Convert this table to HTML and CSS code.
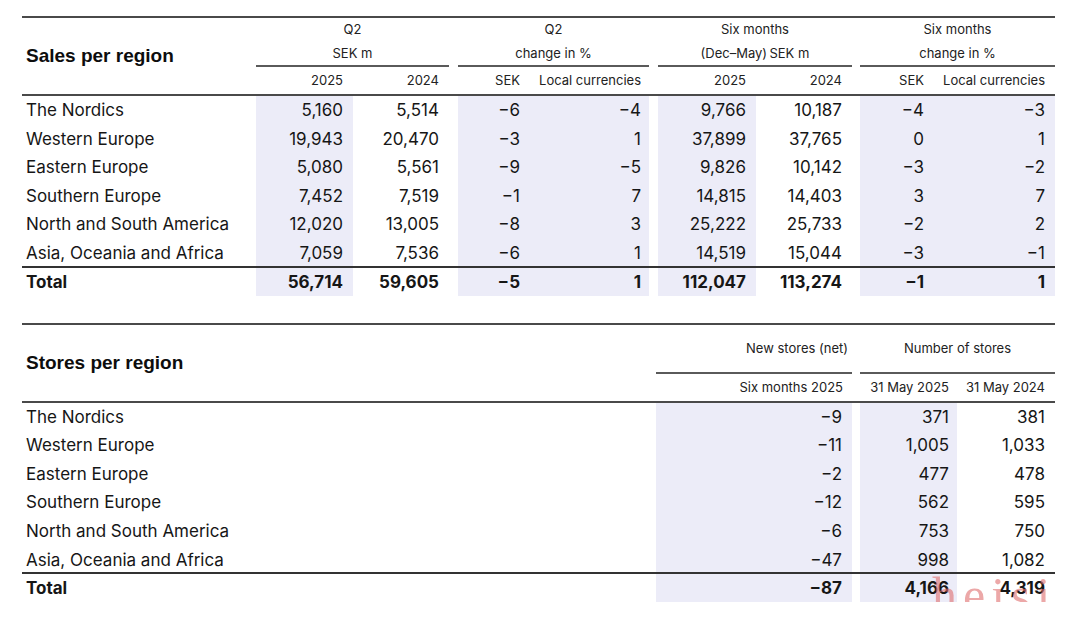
FILE: index.html
```html
<!DOCTYPE html>
<html lang="en">
<head>
<meta charset="utf-8">
<title>Sales and stores per region</title>
<link rel="stylesheet" href="styles.css">
</head>
<body>
<section class="tbl sales">
  <div class="thead">
    <div class="title">Sales per region</div>
    <div class="grp c2">Q2<br>SEK m</div>
    <div class="grp c5">Q2<br>change in %</div>
    <div class="grp c8">Six months<br>(Dec–May)&thinsp;SEK m</div>
    <div class="grp c11">Six months<br>change in %</div>
    <div class="sub c2">2025</div><div class="sub">2024</div><div class="sub"></div>
    <div class="sub">SEK</div><div class="sub lc">Local currencies</div><div class="sub"></div>
    <div class="sub">2025</div><div class="sub">2024</div><div class="sub"></div>
    <div class="sub">SEK</div><div class="sub">Local currencies</div>
  </div>
  <div class="tbody">
    <div class="lab">The Nordics</div><div class="sh">5,160</div><div>5,514</div><div></div><div class="sh">−6</div><div class="sh lc">−4</div><div></div><div class="sh">9,766</div><div>10,187</div><div></div><div class="sh">−4</div><div class="sh">−3</div>
    <div class="lab">Western Europe</div><div class="sh">19,943</div><div>20,470</div><div></div><div class="sh">−3</div><div class="sh lc">1</div><div></div><div class="sh">37,899</div><div>37,765</div><div></div><div class="sh">0</div><div class="sh">1</div>
    <div class="lab">Eastern Europe</div><div class="sh">5,080</div><div>5,561</div><div></div><div class="sh">−9</div><div class="sh lc">−5</div><div></div><div class="sh">9,826</div><div>10,142</div><div></div><div class="sh">−3</div><div class="sh">−2</div>
    <div class="lab">Southern Europe</div><div class="sh">7,452</div><div>7,519</div><div></div><div class="sh">−1</div><div class="sh lc">7</div><div></div><div class="sh">14,815</div><div>14,403</div><div></div><div class="sh">3</div><div class="sh">7</div>
    <div class="lab">North and South America</div><div class="sh">12,020</div><div>13,005</div><div></div><div class="sh">−8</div><div class="sh lc">3</div><div></div><div class="sh">25,222</div><div>25,733</div><div></div><div class="sh">−2</div><div class="sh">2</div>
    <div class="lab">Asia, Oceania and Africa</div><div class="sh">7,059</div><div>7,536</div><div></div><div class="sh">−6</div><div class="sh lc">1</div><div></div><div class="sh">14,519</div><div>15,044</div><div></div><div class="sh">−3</div><div class="sh">−1</div>
  </div>
  <div class="tfoot">
    <div class="lab">Total</div><div class="sh">56,714</div><div>59,605</div><div></div><div class="sh">−5</div><div class="sh lc">1</div><div></div><div class="sh">112,047</div><div>113,274</div><div></div><div class="sh">−1</div><div class="sh">1</div>
  </div>
</section>

<section class="tbl stores">
  <div class="thead">
    <div class="title">Stores per region</div>
    <div class="grp n2 right">New stores (net)</div>
    <div class="grp c4">Number of stores</div>
    <div class="sub n2">Six months 2025</div><div class="sub"></div>
    <div class="sub nar">31 May 2025</div><div class="sub">31 May 2024</div>
  </div>
  <div class="tbody">
    <div class="lab">The Nordics</div><div class="sh">−9</div><div></div><div class="sh nar">371</div><div>381</div>
    <div class="lab">Western Europe</div><div class="sh">−11</div><div></div><div class="sh nar">1,005</div><div>1,033</div>
    <div class="lab">Eastern Europe</div><div class="sh">−2</div><div></div><div class="sh nar">477</div><div>478</div>
    <div class="lab">Southern Europe</div><div class="sh">−12</div><div></div><div class="sh nar">562</div><div>595</div>
    <div class="lab">North and South America</div><div class="sh">−6</div><div></div><div class="sh nar">753</div><div>750</div>
    <div class="lab">Asia, Oceania and Africa</div><div class="sh">−47</div><div></div><div class="sh nar">998</div><div>1,082</div>
  </div>
  <div class="tfoot">
    <div class="lab">Total</div><div class="sh">−87</div><div></div><div class="sh nar">4,166</div><div>4,319</div>
  </div>
  <div class="watermark">heisi</div>
</section>
</body>
</html>
```

FILE: styles.css
```css
html, body {
  background: #ffffff;
}
body {
  margin: 16px 25px 0 22px;
  font-family: Inter, "Liberation Sans", sans-serif;
  color: #161616;
}

.tbl {
  position: relative;
  border-top: 2px solid #4a4a4a;
}
.stores {
  margin-top: 27px;
}

.sales .thead,
.sales .tbody,
.sales .tfoot {
  display: grid;
  grid-template-columns: 234px 97px 96px 9px 72px 119px 9px 98px 96px 8px 74px 121px;
}
.stores .thead,
.stores .tbody,
.stores .tfoot {
  display: grid;
  grid-template-columns: 634px 196px 8px 97px 98px;
}

.thead {
  grid-template-rows: 49px 27px;
  border-bottom: 2px solid #4a4a4a;
}
.title {
  grid-column: 1;
  grid-row: 1 / 3;
  align-self: center;
  padding-left: 4px;
  font-family: "Liberation Sans", Arial, sans-serif;
  font-weight: 700;
  font-size: 19px;
  color: #0d0d0d;
}
.grp {
  grid-row: 1;
  font-size: 13px;
  line-height: 23.5px;
  text-align: center;
  color: #222;
  border-bottom: 2px solid #5a5a5a;
}
.stores .grp {
  line-height: 47px;
}
.grp.right {
  text-align: right;
  padding-right: 4px;
}
.c2 { grid-column: 2 / span 2; }
.n2 { grid-column: 2; }
.c4 { grid-column: 4 / span 2; }
.c5 { grid-column: 5 / span 2; }
.c8 { grid-column: 8 / span 2; }
.c11 { grid-column: 11 / span 2; }
.sales .sub.c2 { grid-column: 2; }

.sub {
  grid-row: 2;
  font-size: 13px;
  line-height: 27px;
  text-align: right;
  padding-right: 10px;
  color: #222;
}
.sub.n2 { padding-right: 9px; }

.tbody {
  grid-auto-rows: 28.6px;
}
.tbody > div,
.tfoot > div {
  font-size: 17px;
  line-height: 28.6px;
  text-align: right;
  padding-right: 10px;
  white-space: nowrap;
}
.tbody > .lab,
.tfoot > .lab {
  text-align: left;
  padding-left: 4px;
  padding-right: 0;
}
.tbody > .lc,
.tfoot > .lc,
.sub.lc,
.tbody > .nar,
.tfoot > .nar,
.sub.nar {
  padding-right: 8px;
}

.sh {
  background: #ececf8;
}

.tfoot {
  position: relative;
  margin-top: -2px;
  border-top: 2px solid #333;
  grid-auto-rows: 28px;
}
.tfoot > div {
  line-height: 28px;
  font-weight: 700;
}

.watermark {
  position: absolute;
  left: 910px;
  top: 245px;
  z-index: 2;
  font-family: "Liberation Serif", serif;
  font-size: 50px;
  line-height: 50px;
  letter-spacing: 6px;
  color: rgba(224, 110, 110, 0.6);
  pointer-events: none;
}
```
